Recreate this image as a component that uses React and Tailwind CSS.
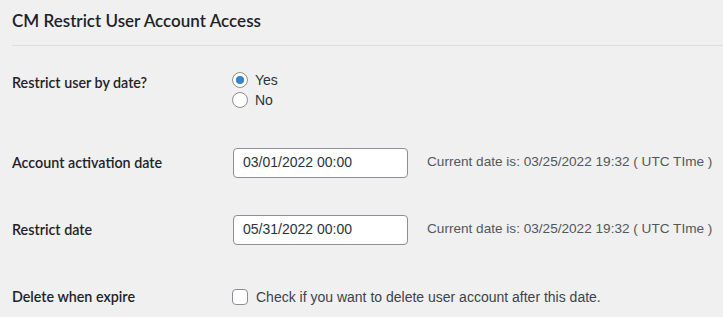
import React from 'react';

export default function App() {
  return (
    <div className="w-[723px] h-[317px] overflow-hidden bg-[#f0f0f1] text-[#1d2327] font-['Liberation_Sans',Arial,sans-serif]">
      <div className="pl-3">
        <h2 className="pt-[9px] h-[32px] text-[17px] leading-[23px] font-semibold font-['Lato','Liberation_Sans',sans-serif]">CM Restrict User Account Access</h2>
        <div className="mt-[13px] h-px bg-[#dcdcde]" />

        {/* Restrict user by date */}
        <div className="flex h-[83px] pt-[24px]">
          <div className="w-[220px] mt-[3px] text-[14.3px] leading-[20px] font-semibold font-['Lato','Liberation_Sans',sans-serif]">Restrict user by date?</div>
          <div className="flex flex-col text-[14px] leading-[20px] text-[#2c3338]">
            <label className="flex items-center gap-[7px]">
              <span className="w-4 h-4 rounded-full border border-[#8c8f94] bg-white flex items-center justify-center">
                <span className="w-2 h-2 rounded-full bg-[#3582c4]" />
              </span>
              Yes
            </label>
            <label className="flex items-center gap-[7px]">
              <span className="w-4 h-4 rounded-full border border-[#8c8f94] bg-white" />
              No
            </label>
          </div>
        </div>

        <DateRow label="Account activation date" value="03/01/2022 00:00" />
        <DateRow label="Restrict date" value="05/31/2022 00:00" />

        {/* Delete when expire */}
        <div className="flex items-center h-[67px]">
          <div className="w-[220px] text-[14.3px] leading-[20px] font-semibold font-['Lato','Liberation_Sans',sans-serif]">Delete when expire</div>
          <label className="flex items-center gap-2 text-[14px] leading-[20px] text-[#3c434a]">
            <span className="w-4 h-4 rounded-[4px] border border-[#8c8f94] bg-white" />
            Check if you want to delete user account after this date.
          </label>
        </div>
      </div>
    </div>
  );
}

function DateRow({ label, value }) {
  return (
    <div className="flex items-center h-[67px]">
      <div className="w-[221px] text-[14.3px] leading-[20px] font-semibold font-['Lato','Liberation_Sans',sans-serif]">{label}</div>
      <div className="w-[175px] h-[30px] rounded-[4px] border border-[#8c8f94] bg-white px-[9px] flex items-center text-[14px] text-[#2c3338]">
        {value}
      </div>
      <span className="ml-[19px] text-[13.6px] text-[#50575e]">Current date is: 03/25/2022 19:32 ( UTC TIme )</span>
    </div>
  );
}
